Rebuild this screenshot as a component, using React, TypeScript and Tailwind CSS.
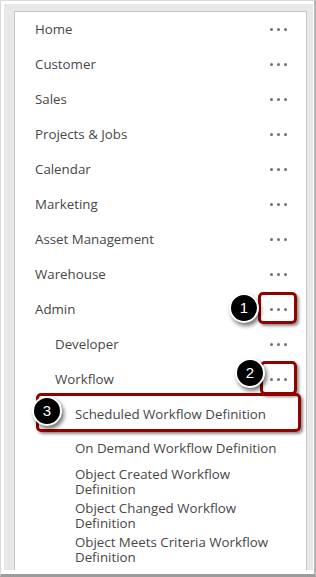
import React from 'react';

const font = { fontFamily: '"Open Sans", "Noto Sans", sans-serif' };

const Dots: React.FC = () => (
    <div className="flex items-center gap-[4px]">
        <span className="w-[3px] h-[3px] rounded-full bg-[#707070]"></span>
        <span className="w-[3px] h-[3px] rounded-full bg-[#707070]"></span>
        <span className="w-[3px] h-[3px] rounded-full bg-[#707070]"></span>
    </div>
);

const Row: React.FC<{ label: string; indent?: boolean }> = ({ label, indent }) => (
    <div className={`h-[35px] flex items-center justify-between pr-[19px] ${indent ? 'pl-[40px]' : 'pl-[20px]'}`}>
        <span>{label}</span>
        <Dots />
    </div>
);

const SubItem: React.FC<{ label: string }> = ({ label }) => (
    <div className="h-[34px] flex items-center pl-[60px]">
        <span className="w-[212px] leading-[15px]">{label}</span>
    </div>
);

const Marker: React.FC<{ n: number; className: string }> = ({ n, className }) => (
    <div
        className={`absolute w-[30px] h-[30px] rounded-full bg-black border-2 border-white flex items-center justify-center text-white text-[15px] shadow-[2px_3px_4px_rgba(0,0,0,0.55)] ${className}`}
        style={{ fontFamily: '"Liberation Sans", Arial, sans-serif' }}
    >
        {n}
    </div>
);

export default function App() {
    const top = ['Home', 'Customer', 'Sales', 'Projects & Jobs', 'Calendar', 'Marketing', 'Asset Management', 'Warehouse', 'Admin'];
    const subs = [
        'Scheduled Workflow Definition',
        'On Demand Workflow Definition',
        'Object Created Workflow Definition',
        'Object Changed Workflow Definition',
        'Object Meets Criteria Workflow Definition',
    ];

    return (
        <div className="relative w-[316px] h-[577px] bg-white border-t border-l border-[#dadada] border-r-[2px] border-r-[#b5b5b5] border-b-[3px] border-b-[#9c9c9c] overflow-hidden">
            <div className="pt-[3px] pl-[3px] pr-[1px] pb-[4px] h-full">
                <div className="bg-[#e8e8e8] pt-[7px] pl-[10px] pr-[6px] h-full">
                    {/* Nav panel */}
                    <div className="bg-white border-t border-l border-r border-[#c6c6c6] h-full text-[13.3px] text-[#474747]" style={font}>
                        {top.map((t) => (
                            <Row key={t} label={t} />
                        ))}
                        <Row label="Developer" indent />
                        <Row label="Workflow" indent />
                        {subs.map((s) => (
                            <SubItem key={s} label={s} />
                        ))}
                    </div>
                </div>
            </div>

            {/* Callouts */}
            <div className="absolute left-[257px] top-[291px] w-[39px] h-[32px] border-[3px] border-[#930000] rounded-[5px] shadow-[2px_2px_3px_rgba(0,0,0,0.45)]"></div>
            <div className="absolute left-[259px] top-[360px] w-[37px] h-[34px] border-[3px] border-[#930000] rounded-[5px] shadow-[2px_2px_3px_rgba(0,0,0,0.45)]"></div>
            <div className="absolute left-[35px] top-[392px] w-[265px] h-[39px] border-[3px] border-[#930000] rounded-[5px] shadow-[2px_2px_3px_rgba(0,0,0,0.45)]"></div>

            <Marker n={1} className="left-[228px] top-[292px]" />
            <Marker n={2} className="left-[234px] top-[357px]" />
            <Marker n={3} className="left-[31px] top-[395px]" />
        </div>
    );
}
